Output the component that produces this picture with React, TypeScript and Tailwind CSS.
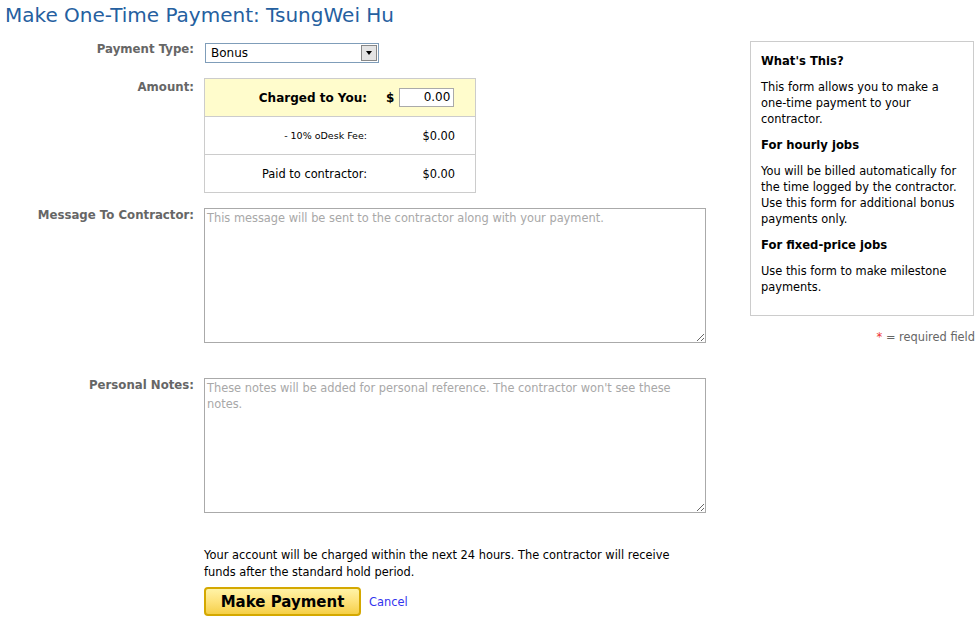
import React from 'react';

const font = "font-['DejaVu_Sans','Liberation_Sans',sans-serif]";

export default function App() {
  return (
    <div className={`relative w-[979px] h-[619px] overflow-hidden bg-white text-[11.4px] leading-[16px] text-black ${font}`}>
      {/* Page title */}
      <h1 className="pl-[5px] pt-[3px] h-[35px] text-[20px] leading-[24px] text-[#2560a0]">
        Make One-Time Payment: TsungWei Hu
      </h1>

      <div className="flex">
        {/* Form column */}
        <div className="w-[710px] flex flex-col">
          {/* Payment type */}
          <div className="flex mt-[8px]">
            <label className="w-[194px] text-right font-bold text-[11.75px] text-[#666] -mt-[2px]">Payment Type:</label>
            <div className="ml-[11px] w-[174px] h-[20px] border border-[#7f9db9] flex items-center justify-between bg-white">
              <span className="pl-[5px] text-[12px]">Bonus</span>
              <span className="w-[16px] h-[16px] mr-[1px] border border-[#888] bg-[#e4e4e4] flex items-center justify-center">
                <span className="w-0 h-0 border-l-[3px] border-r-[3px] border-t-[4px] border-l-transparent border-r-transparent border-t-black" />
              </span>
            </div>
          </div>

          {/* Amount */}
          <div className="flex mt-[15px]">
            <label className="w-[194px] text-right font-bold text-[11.75px] text-[#666] pt-[1px]">Amount:</label>
            <div className="ml-[10px] w-[272px] border border-[#ccc]">
              <div className="h-[38px] bg-[#fffccc] flex items-center border-b border-[#ccc]">
                <span className="w-[162px] text-right font-bold text-[12px]">Charged to You:</span>
                <span className="ml-[19px] font-bold text-[12px]">$</span>
                <div className="ml-[5px] w-[55px] h-[19px] border border-[#aaa] bg-white text-right pr-[3px] text-[12px] leading-[17px]">0.00</div>
              </div>
              <div className="h-[38px] flex items-center border-b border-[#ccc]">
                <span className="w-[162px] text-right text-[9.5px]">- 10% oDesk Fee:</span>
                <span className="w-[88px] text-right">$0.00</span>
              </div>
              <div className="h-[37px] flex items-center">
                <span className="w-[162px] text-right">Paid to contractor:</span>
                <span className="w-[88px] text-right">$0.00</span>
              </div>
            </div>
          </div>

          {/* Message */}
          <div className="flex mt-[15px]">
            <label className="w-[194px] text-right font-bold text-[11.75px] text-[#666] -mt-[1px]">Message To Contractor:</label>
            <textarea
              className="ml-[10px] w-[502px] h-[135px] border border-[#aaa] px-[2px] py-[1px] resize-y outline-none placeholder:text-[#a8a8a8]"
              placeholder="This message will be sent to the contractor along with your payment."
            />
          </div>

          {/* Personal notes */}
          <div className="flex mt-[35px]">
            <label className="w-[194px] text-right font-bold text-[11.75px] text-[#666] -mt-[1px]">Personal Notes:</label>
            <textarea
              className="ml-[10px] w-[502px] h-[135px] border border-[#aaa] px-[2px] py-[1px] resize-y outline-none placeholder:text-[#a8a8a8]"
              placeholder="These notes will be added for personal reference. The contractor won't see these notes."
            />
          </div>

          {/* Footer */}
          <div className="ml-[204px] mt-[34px] w-[480px]">
            <p className="leading-[17px]">
              Your account will be charged within the next 24 hours. The contractor will receive funds after the standard hold period.
            </p>
            <div className="mt-[6px] flex items-center">
              <button className="w-[157px] h-[29px] rounded-[4px] border-2 border-[#d4a800] bg-gradient-to-b from-[#fff3a6] via-[#fde27a] to-[#f5cf45] font-bold text-[15px]">
                Make Payment
              </button>
              <a href="#" className="ml-[8px] text-[#3333ee]">Cancel</a>
            </div>
          </div>
        </div>

        {/* Side help box */}
        <div className="ml-[40px] w-[224px] flex flex-col">
          <div className="mt-[6px] h-[275px] border border-[#ccc] px-[10px] pt-[11px]">
            <h3 className="font-bold text-[11.6px]">What's This?</h3>
            <p className="mt-[10px]">This form allows you to make a one-time payment to your contractor.</p>
            <h3 className="mt-[10px] font-bold text-[11.6px]">For hourly jobs</h3>
            <p className="mt-[10px]">You will be billed automatically for the time logged by the contractor. Use this form for additional bonus payments only.</p>
            <h3 className="mt-[10px] font-bold text-[11.6px]">For fixed-price jobs</h3>
            <p className="mt-[10px]">Use this form to make milestone payments.</p>
          </div>
          <div className="mt-[13px] text-right text-[#666] -mr-[1px]">
            <span className="text-[#e33]">*</span> = required field
          </div>
        </div>
      </div>
    </div>
  );
}
